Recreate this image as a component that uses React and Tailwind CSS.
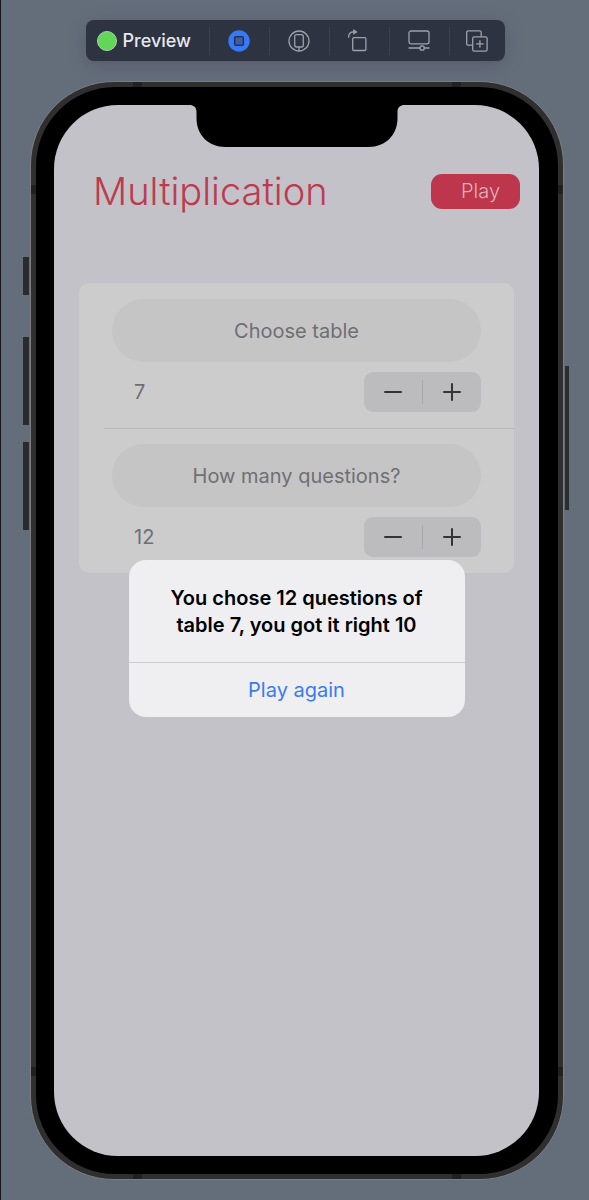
// Quiz settings screen shown inside the device preview canvas
import { useState } from 'react'

const SelectableIcon = () => (
  <svg viewBox="0 0 24 24" className="w-6 h-6">
    <circle cx="12" cy="12" r="10.7" fill="#3579f6" />
    <rect x="7.7" y="7.7" width="8.6" height="8.6" rx="1" fill="#3d5fa0" stroke="#22325a" strokeWidth="1.5" />
  </svg>
)

const DeviceIcon = () => (
  <svg viewBox="0 0 24 24" className="w-6 h-6" fill="none" stroke="currentColor" strokeWidth="1.3">
    <circle cx="12" cy="12" r="10" />
    <rect x="7.7" y="5.7" width="8.6" height="12.3" rx="2" />
    <path d="M12 18v4" />
  </svg>
)

const RotateIcon = () => (
  <svg viewBox="0 0 24 24" className="w-6 h-6" fill="none" stroke="currentColor" strokeWidth="1.3">
    <rect x="5.7" y="8.7" width="13.2" height="12.8" rx="1.2" />
    <path d="M1.6 8.2c0-3.6 1.6-5.3 5.2-5.3" strokeLinecap="round" />
    <path d="M6.2 0l4.4 2.9-4.4 2.9z" fill="currentColor" stroke="none" />
  </svg>
)

const DisplayIcon = () => (
  <svg viewBox="0 0 24 24" className="w-6 h-6" fill="none" stroke="currentColor" strokeWidth="1.3">
    <rect x="2" y="2" width="20" height="12.8" rx="2" />
    <path d="M2 19h10.8M17.4 19H22" strokeLinecap="round" />
    <circle cx="15.1" cy="19" r="2.2" />
  </svg>
)

const DuplicateIcon = () => (
  <svg viewBox="0 0 24 24" className="w-6 h-6" fill="none" stroke="currentColor" strokeWidth="1.3">
    <path d="M7.6 16.2H3.2a1.5 1.5 0 0 1-1.5-1.5V3.3a1.5 1.5 0 0 1 1.5-1.5h11.5a1.5 1.5 0 0 1 1.5 1.5v4.5" />
    <rect x="7.7" y="7.9" width="14.4" height="14.2" rx="1.6" />
    <path d="M14.9 11.6v6.6M11.6 14.9h6.6" strokeLinecap="round" />
  </svg>
)

const TOOLS = [
  { label: 'Selectable', icon: SelectableIcon },
  { label: 'Device', icon: DeviceIcon },
  { label: 'Rotate', icon: RotateIcon },
  { label: 'Display settings', icon: DisplayIcon },
  { label: 'Duplicate preview', icon: DuplicateIcon },
]

// side keys and antenna lines of the phone body
const HARDWARE = [
  '-left-2 top-[175px] w-[6px] h-[38px] bg-[#2b2b2d]',
  '-left-2 top-[255px] w-[6px] h-[88px] bg-[#2b2b2d]',
  '-left-2 top-[360px] w-[6px] h-[88px] bg-[#2b2b2d]',
  '-right-[6px] top-[284px] w-1 h-[144px] bg-[#2a2e2c]',
  'left-[102px] top-0 w-[9px] h-[5px] bg-[#202022]',
  'right-[102px] top-0 w-[9px] h-[5px] bg-[#202022]',
  'left-[102px] bottom-0 w-[9px] h-[5px] bg-[#202022]',
  'right-[102px] bottom-0 w-[9px] h-[5px] bg-[#202022]',
  'left-0 top-[103px] w-[5px] h-[9px] bg-[#202022]',
  'right-0 top-[103px] w-[5px] h-[9px] bg-[#202022]',
  'left-0 bottom-[103px] w-[5px] h-[9px] bg-[#202022]',
  'right-0 bottom-[103px] w-[5px] h-[9px] bg-[#202022]',
]

function Toolbar() {
  return (
    <div className="flex items-center h-[41px] rounded-lg bg-[#2e3341] text-[#9da1ab] shadow-[0_4px_16px_rgba(70,55,80,0.35)]">
      <div className="flex items-center gap-[6px] w-[123px] pl-[11px]">
        <span className="w-5 h-5 rounded-full bg-[#62d658] border border-[#a8d3a8]" />
        <span className="text-[18px] leading-6 font-medium text-[#e6e8ee]">Preview</span>
      </div>
      {TOOLS.map(({ label, icon: Icon }) => (
        <div key={label} className="flex items-center justify-center w-[60px] last:w-[56px] h-7 border-l border-[#3d4250]">
          <button type="button" aria-label={label}><Icon /></button>
        </div>
      ))}
    </div>
  )
}

function Stepper({ label, value, onChange }) {
  return (
    <div className="flex items-center w-[117px] h-10 rounded-[9px] bg-[#bcbcbf] text-[#343437]">
      <button type="button" aria-label={`Decrease ${label}`} onClick={() => onChange(value - 1)} className="flex-1 flex justify-center">
        <svg viewBox="0 0 18 18" className="w-[18px] h-[18px]" stroke="currentColor" strokeWidth="2" strokeLinecap="round">
          <path d="M1 9h16" />
        </svg>
      </button>
      <span className="w-px h-6 bg-[#a9a9ad]" />
      <button type="button" aria-label={`Increase ${label}`} onClick={() => onChange(value + 1)} className="flex-1 flex justify-center">
        <svg viewBox="0 0 18 18" className="w-[18px] h-[18px]" stroke="currentColor" strokeWidth="2" strokeLinecap="round">
          <path d="M1 9h16M9 1v16" />
        </svg>
      </button>
    </div>
  )
}

function SettingRow({ title, value, onChange }) {
  return (
    <div className="px-[33px] pt-4 pb-4">
      <div className="flex items-center justify-center h-[63px] rounded-full bg-[#c5c5c5]">{title}</div>
      <div className="flex items-center justify-between mt-[10px] pl-[22px]">
        <output>{value}</output>
        <Stepper label={title} value={value} onChange={onChange} />
      </div>
    </div>
  )
}

export default function App() {
  const [table, setTable] = useState(7)
  const [questions, setQuestions] = useState(12)
  const [showResult, setShowResult] = useState(true)

  return (
    <div className="flex flex-col items-center min-h-screen pt-5 pb-5 border-l border-[#14171c] bg-[#646e7b] font-['Inter','Liberation_Sans',sans-serif]">
      <Toolbar />

      <div className="w-full flex-1 flex pl-[29px] pr-[25px] mt-5">
        {/* phone body */}
        <div className="relative flex-1 flex p-[5px] rounded-[84px] border border-[#7c7d80] bg-[#2f2f30]">
          {HARDWARE.map((c) => <span key={c} className={`absolute ${c}`} />)}

          <div className="flex-1 flex py-[18px] pl-[18px] pr-[19px] rounded-[79px] bg-black">
            <div className="relative flex-1 rounded-[64px] bg-[#c3c2c8] text-[20px] leading-7 text-[#6f6f74]">
              {/* notch */}
              <svg viewBox="0 0 215 42" className="absolute top-0 left-1/2 -translate-x-1/2 w-[215px] h-[42px]">
                <path d="M0 0h215c-4 0-7 2-7 7v6c0 17-12 29-29 29H36C19 42 7 30 7 13V7c0-5-3-7-7-7z" />
              </svg>

              <div className="flex items-center justify-between pt-[61px] pl-[39px] pr-[19px]">
                <h1 className="text-[38px] leading-[50px] font-light text-[#bd3b51]">Multiplication</h1>
                <button
                  type="button"
                  onClick={() => setShowResult(true)}
                  className="h-[35px] pl-[30px] pr-5 rounded-[11px] bg-[#bd364c] font-light text-[#dfb3bb]"
                >
                  Play
                </button>
              </div>

              <div className="mt-[67px] mx-[25px] rounded-[10px] bg-[#cccccc]">
                <SettingRow title="Choose table" value={table} onChange={setTable} />
                <div className="h-px -mb-px ml-[25px] bg-[#b8b8ba]" />
                <SettingRow title="How many questions?" value={questions} onChange={setQuestions} />
              </div>

              {showResult && (
                <div className="absolute inset-0 flex items-center justify-center pt-4">
                  <div role="alertdialog" aria-labelledby="result" className="w-[336px] rounded-[17px] bg-[#efeff2]">
                    <h2 id="result" className="px-8 pt-[25px] pb-[23px] text-center text-[20px] leading-[27px] font-semibold text-black">
                      {`You chose ${questions} questions of table ${table}, you got it right 10`}
                    </h2>
                    <button
                      type="button"
                      onClick={() => setShowResult(false)}
                      className="block w-full h-[55px] border-t border-[#cbcbd0] text-[#3a7bee]"
                    >
                      Play again
                    </button>
                  </div>
                </div>
              )}
            </div>
          </div>
        </div>
      </div>
    </div>
  )
}
